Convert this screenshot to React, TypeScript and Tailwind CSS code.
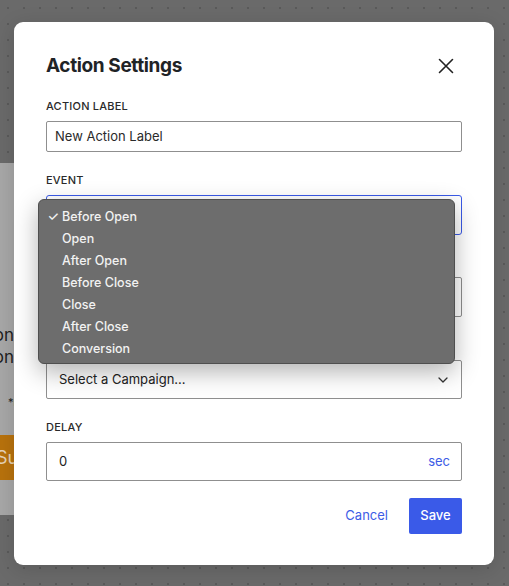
import React from "react";

const font = { fontFamily: "Inter, 'Noto Sans', sans-serif" };

function Label({ children }: { children: React.ReactNode }) {
  return (
    <div className="mb-[7px] text-[11px] leading-4 font-medium tracking-[0.02em] text-[#2a2a2a] uppercase">
      {children}
    </div>
  );
}

function Chevron() {
  return (
    <svg width="10" height="6" viewBox="0 0 10 6" fill="none">
      <path d="M1 1l4 4 4-4" stroke="#333" strokeWidth="1.3" strokeLinecap="round" strokeLinejoin="round" />
    </svg>
  );
}

export default function App() {
  const items = ["Before Open", "Open", "After Open", "Before Close", "Close", "After Close", "Conversion"];
  return (
    <div
      className="relative w-[509px] h-[586px] overflow-hidden bg-[#6a6a6a] bg-[radial-gradient(circle,#5a5a5a_0.8px,transparent_1px)] bg-[length:16px_16px]"
      style={font}
    >
      {/* backdrop page content */}
      <div className="absolute left-[-200px] top-[163px] w-[230px] h-[352px] bg-[#a7a7a7] flex flex-col items-end pr-[16px]">
        <div className="mt-[161px] text-[17px] leading-[22px] text-[#1e1e1e]">Location</div>
        <div className="text-[17px] leading-[22px] text-[#1e1e1e]">Condition</div>
        <div className="self-start ml-[208px] mt-[26px] text-[11px] text-[#222]">*required</div>
        <div className="mt-[24px] w-full h-[45px] bg-[#b8720d] flex items-center text-[18px] text-[#e6d2b8]">
          <span className="ml-[196px]">Submit</span>
        </div>
      </div>

      {/* modal */}
      <div className="absolute left-[14px] top-[22px] w-[480px] h-[543px] bg-white rounded-[9px] shadow-[0_4px_20px_rgba(0,0,0,0.15)] px-8 pt-[30px]">
        <div className="flex items-center justify-between h-7">
          <h1 className="text-[19px] leading-7 font-bold text-[#1f2326] tracking-[-0.02em]">Action Settings</h1>
          <svg width="16" height="16" viewBox="0 0 16 16" className="mr-[8px]">
            <path d="M1.5 1.5L14.5 14.5M14.5 1.5L1.5 14.5" stroke="#222" strokeWidth="1.6" strokeLinecap="round" />
          </svg>
        </div>

        <div className="mt-[18px]">
          <Label>Action Label</Label>
          <div className="h-[31px] border border-[#8f8f8f] rounded-[2px] flex items-center px-2 text-[13px] text-[#2a2a2a]">
            New Action Label
          </div>
        </div>

        <div className="mt-[20px]">
          <Label>Event</Label>
          <div className="h-[40px] border-[1.5px] border-[#3a5ae8] rounded-[3px] flex items-center justify-between px-3 text-[13px] text-[#222]">
            <span>Before Open</span>
            <Chevron />
          </div>
        </div>

        <div className="mt-[19px]">
          <Label>Action</Label>
          <div className="h-[40px] border border-[#8f8f8f] rounded-[2px] flex items-center justify-between px-3 text-[13px] text-[#222]">
            <span>Redirect</span>
            <Chevron />
          </div>
        </div>

        <div className="mt-[20px]">
          <Label>Campaign</Label>
          <div className="h-[39px] border border-[#8f8f8f] rounded-[2px] flex items-center justify-between pl-3 pr-[13px] text-[13px] text-[#222]">
            <span>Select a Campaign...</span>
            <Chevron />
          </div>
        </div>

        <div className="mt-[20px]">
          <Label>Delay</Label>
          <div className="h-[39px] border border-[#8f8f8f] rounded-[2px] flex items-center justify-between pl-3 pr-[11px] text-[13px]">
            <span className="text-[#222]">0</span>
            <span className="text-[#3d5ce6]">sec</span>
          </div>
        </div>

        <div className="mt-[17px] flex justify-end items-center gap-[21px]">
          <button className="text-[13px] text-[#3d5ce6] px-0">Cancel</button>
          <button className="h-[36px] w-[53px] bg-[#3a5ae8] rounded-[2px] text-white text-[13px] font-medium">Save</button>
        </div>
      </div>

      {/* dropdown menu overlay */}
      <div className="absolute left-[38px] top-[199px] w-[417px] h-[165px] bg-[#6d6d6d] border border-[#4f4f4f] rounded-[6px] shadow-[0_8px_24px_rgba(0,0,0,0.3)] pt-[6px]">
        {items.map((t, i) => (
          <div key={t} className="h-[22px] flex items-center text-[12.5px] font-medium text-[#f2f2f2]">
            <span className="w-[23px] text-right pr-[3px] text-[13px]">{i === 0 ? "✓" : ""}</span>
            <span>{t}</span>
          </div>
        ))}
      </div>
    </div>
  );
}
